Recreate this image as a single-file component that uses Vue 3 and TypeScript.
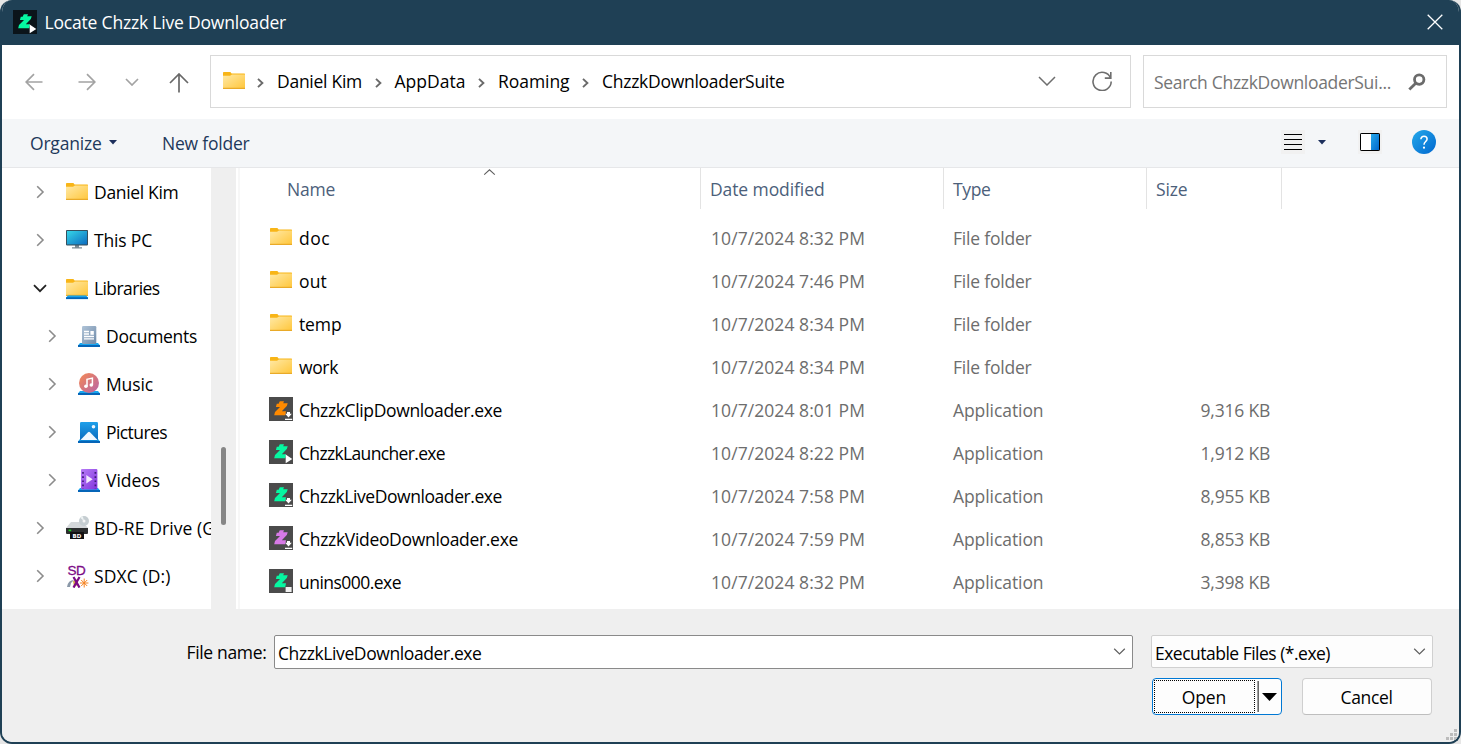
<script setup lang="ts">
interface Crumb { label: string; width: number }
interface TreeNode { label: string; icon: string; width: number; nested?: boolean; open?: boolean }
interface FileRow { name: string; width: number; date: string; kind: 'folder' | 'app'; size?: string; color?: string; badge?: 'down' | 'play' | 'stop' }

const crumbs: Crumb[] = [
  { label: 'Daniel Kim', width: 85 },
  { label: 'AppData', width: 71 },
  { label: 'Roaming', width: 71.5 },
  { label: 'ChzzkDownloaderSuite', width: 182.5 },
]

const tree: TreeNode[] = [
  { label: 'Daniel Kim', icon: 'folder', width: 84.5 },
  { label: 'This PC', icon: 'pc', width: 58 },
  { label: 'Libraries', icon: 'library', width: 65.5, open: true },
  { label: 'Documents', icon: 'documents', width: 91, nested: true },
  { label: 'Music', icon: 'music', width: 47, nested: true },
  { label: 'Pictures', icon: 'pictures', width: 61, nested: true },
  { label: 'Videos', icon: 'videos', width: 54, nested: true },
  { label: 'BD-RE Drive (G:)', icon: 'drive', width: 131 },
  { label: 'SDXC (D:)', icon: 'sd', width: 76.5 },
]

const green = '#06f7a1'
const files: FileRow[] = [
  { name: 'doc', width: 31, date: '10/7/2024 8:32 PM', kind: 'folder' },
  { name: 'out', width: 28, date: '10/7/2024 7:46 PM', kind: 'folder' },
  { name: 'temp', width: 42.5, date: '10/7/2024 8:34 PM', kind: 'folder' },
  { name: 'work', width: 39, date: '10/7/2024 8:34 PM', kind: 'folder' },
  { name: 'ChzzkClipDownloader.exe', width: 203, date: '10/7/2024 8:01 PM', kind: 'app', size: '9,316 KB', color: '#ff8a00', badge: 'down' },
  { name: 'ChzzkLauncher.exe', width: 146, date: '10/7/2024 8:22 PM', kind: 'app', size: '1,912 KB', color: green, badge: 'play' },
  { name: 'ChzzkLiveDownloader.exe', width: 203, date: '10/7/2024 7:58 PM', kind: 'app', size: '8,955 KB', color: green, badge: 'down' },
  { name: 'ChzzkVideoDownloader.exe', width: 219, date: '10/7/2024 7:59 PM', kind: 'app', size: '8,853 KB', color: '#d77ae6', badge: 'down' },
  { name: 'unins000.exe', width: 102, date: '10/7/2024 8:32 PM', kind: 'app', size: '3,398 KB', color: green, badge: 'stop' },
]

const zPath = 'M10.8 4.2H15l-.8 2h4.5l-.9 2.7-5 5.3H17L16.2 18.2H5.2L6 15.1l5-5.1H6.9L7.8 6.8h1.8z'

// Tracks the text so that a label takes up the given width.
const vFit = {
  mounted(el: HTMLElement, binding: { value: number }) {
    const natural = el.getBoundingClientRect().width
    const count = (el.textContent ?? '').trim().length
    if (count) el.style.letterSpacing = `${((binding.value - natural) / count).toFixed(3)}px`
  },
}
</script>

<template>
  <div class="desktop">
    <svg class="defs" width="0" height="0" aria-hidden="true">
      <defs>
        <linearGradient id="gFolder" x1="0" y1="0" x2="1" y2="1"><stop offset="0" stop-color="#ffe9a6" /><stop offset="1" stop-color="#ffc63a" /></linearGradient>
        <linearGradient id="gPc" x1="0" y1="0" x2="1" y2="1"><stop offset="0" stop-color="#35d6e8" /><stop offset="1" stop-color="#0d6cc0" /></linearGradient>
        <linearGradient id="gDoc" x1="0" y1="0" x2="1" y2="1"><stop offset="0" stop-color="#b0c4d8" /><stop offset="1" stop-color="#6f8aa8" /></linearGradient>
        <linearGradient id="gMusic" x1="0" y1="0" x2="1" y2="1"><stop offset="0" stop-color="#f58a54" /><stop offset="1" stop-color="#b763a8" /></linearGradient>
        <linearGradient id="gPic" x1="0" y1="0" x2="0" y2="1"><stop offset="0" stop-color="#1fa0ea" /><stop offset="1" stop-color="#0869bd" /></linearGradient>
        <linearGradient id="gVid" x1="0" y1="0" x2="1" y2="1"><stop offset="0" stop-color="#b67cf6" /><stop offset="1" stop-color="#8234dd" /></linearGradient>
        <linearGradient id="gBlue" x1="0" y1="0" x2="1" y2="1"><stop offset="0" stop-color="#25a9ea" /><stop offset="1" stop-color="#0067cf" /></linearGradient>
        <symbol id="folder" viewBox="0 0 22 17">
          <path d="M0 3V.8Q0 0 .8 0H7.4L8.6 1.6H21.4Q22 1.6 22 2.2V4H0z" fill="#f8b517" />
          <path d="M0 3.8H7L9 2.6H22V16.3Q22 17 21.3 17H.7Q0 17 0 16.3z" fill="url(#gFolder)" />
          <path d="M0 16.4H22" stroke="#e9aa28" stroke-width="1.2" />
        </symbol>
        <symbol id="base" viewBox="0 0 22 4">
          <path d="M2 0H20L22 2.5V4H0V2.5z" fill="#18a6ee" /><path d="M0 2H22V4H0z" fill="#0565b8" />
        </symbol>
        <symbol id="right" viewBox="0 0 9 14"><path d="M1.2 1.2 7 7 1.2 12.8" fill="none" stroke="currentColor" stroke-width="1.6" /></symbol>
      </defs>
    </svg>

    <div class="window">
      <header class="titlebar">
        <svg class="app-icon" viewBox="0 0 24 24">
          <rect width="24" height="24" fill="#0b141a" /><path :d="zPath" fill="#06f7a1" />
          <path d="M16.7 14.5 23.3 19l-6.6 4.3z" fill="#fff" />
        </svg>
        <span v-fit="241.5" class="fit title">Locate Chzzk Live Downloader</span>
        <svg class="close" viewBox="0 0 16 16"><path d="M.7.7l14.6 14.6M15.3.7.7 15.3" stroke="#fff" stroke-width="1.3" /></svg>
      </header>

      <nav class="navbar">
        <div class="nav-icons">
          <svg class="n-arrow" viewBox="0 0 18 18"><path d="M9 1.2 1.2 9 9 16.8M1.2 9H17.5" /></svg>
          <svg class="n-arrow fwd" viewBox="0 0 18 18"><path d="M9 1.2 16.8 9 9 16.8M16.8 9H.5" /></svg>
          <svg class="n-recent" viewBox="0 0 14 8"><path d="M1 1l6 6 6-6" /></svg>
          <svg class="n-up" viewBox="0 0 20 20"><path d="M1 10 10 1l9 9M10 1V19.6" /></svg>
        </div>
        <div class="address">
          <svg class="folder-icon"><use href="#folder" /></svg>
          <div v-for="c in crumbs" :key="c.label" class="crumb">
            <svg class="crumb-sep" viewBox="0 0 7 10"><path d="M1 .9 5.4 5 1 9.1" /></svg>
            <span v-fit="c.width" class="fit">{{ c.label }}</span>
          </div>
          <svg class="addr-down" viewBox="0 0 18 10"><path d="M1 1l8 8 8-8" /></svg>
          <svg class="refresh" viewBox="0 0 20 20"><path d="M18.6 7.2A9.1 9.1 0 1 0 19.2 10.6M18.8 1V7.1H12.8" /></svg>
        </div>
        <div class="search">
          <span v-fit="237" class="fit">Search ChzzkDownloaderSui...</span>
          <svg class="glass" viewBox="0 0 18 18"><circle cx="11.2" cy="6.6" r="4.7" /><path d="M8 10 1.3 16.6" /></svg>
        </div>
      </nav>

      <div class="toolbar">
        <span v-fit="71.5" class="fit">Organize</span>
        <svg class="tri" viewBox="0 0 8 5"><path d="M0 0H8L4 4.6z" /></svg>
        <span v-fit="87.5" class="fit new-folder">New folder</span>
        <svg class="view-list" viewBox="0 0 24 24" shape-rendering="crispEdges"><rect width="24" height="24" fill="#f1f1f1" /><path d="M3 4.5H21M3 9.5H21M3 14.5H21M3 19.5H21" stroke="#000" /></svg>
        <svg class="tri view-tri" viewBox="0 0 8 5"><path d="M0 0H8L4 4.6z" /></svg>
        <svg class="pane" viewBox="0 0 24 24"><rect width="24" height="24" fill="#f1f1f1" /><rect x="2.5" y="3.5" width="19" height="17" rx=".6" fill="#fff" /><path d="M13 4h8v16h-8z" fill="url(#gBlue)" /><rect x="2.5" y="3.5" width="19" height="17" rx=".6" fill="none" stroke="#000" /></svg>
        <svg class="help" viewBox="0 0 24 24"><circle cx="12" cy="12" r="12" fill="url(#gBlue)" /><path d="M8.9 9.3C8.9 7.4 10.2 6.3 12 6.3S15.1 7.4 15.1 9.1C15.1 11.5 12 11.6 12 14.8" fill="none" stroke="#fff" stroke-width="1.5" /><circle cx="12" cy="17.7" r="1.1" fill="#fff" /></svg>
      </div>

      <main class="content">
        <aside class="tree">
          <div v-for="n in tree" :key="n.label" class="node" :class="{ nested: n.nested }">
            <svg v-if="n.open" class="caret open" viewBox="0 0 14 9"><path d="M1 1.2l6 6 6-6" /></svg>
            <svg v-else class="caret"><use href="#right" /></svg>
            <svg class="node-icon" viewBox="0 0 24 24">
              <use v-if="n.icon === 'folder'" href="#folder" x="0" y="3" width="22" height="17" />
              <g v-else-if="n.icon === 'pc'">
                <path d="M6 19.2H16V20.4H6zM9 17h4v2.4H9z" fill="#7b8a94" />
                <rect y="2" width="22" height="15.4" rx=".8" fill="#35505f" /><rect x="1" y="3" width="20" height="13.4" fill="url(#gPc)" />
              </g>
              <g v-else-if="n.icon === 'library'">
                <use href="#folder" y="3" width="22" height="17" /><use href="#base" y="19.2" width="22" height="4" />
              </g>
              <g v-else-if="n.icon === 'documents'">
                <use href="#base" y="19" width="22" height="4" />
                <rect x="4" y="2" width="14.3" height="18" rx="1.2" fill="url(#gDoc)" />
                <path d="M6 7.5h5M6 10h5M6 12.5H16M6 14.8H16" stroke="#fff" stroke-width="1.3" /><rect x="12.4" y="7" width="3.4" height="3.8" fill="#fff" />
              </g>
              <g v-else-if="n.icon === 'music'">
                <use href="#base" y="19" width="22" height="4" />
                <circle cx="11" cy="11" r="10" fill="url(#gMusic)" />
                <path d="M9 14.2V7.3l5.4-1.2v7" fill="none" stroke="#fff" stroke-width="1.5" /><circle cx="7.9" cy="14.2" r="1.8" fill="#fff" /><circle cx="13.3" cy="13" r="1.8" fill="#fff" />
              </g>
              <g v-else-if="n.icon === 'pictures'">
                <use href="#base" y="19" width="22" height="4" />
                <rect x="2" y="2" width="18" height="18.5" rx="1.2" fill="url(#gPic)" />
                <path d="M2.5 20 10 12.2q1-1 2 0L19.5 20z" fill="#f0f8ff" /><circle cx="15.5" cy="6.7" r="1.8" fill="#f0f8ff" />
              </g>
              <g v-else-if="n.icon === 'videos'">
                <use href="#base" y="20" width="22" height="4" />
                <rect x="3" y="1" width="16.4" height="20.4" rx="1" fill="url(#gVid)" />
                <path d="M5 4V21M17.4 4V21" stroke="#3f1b78" stroke-width="1.7" stroke-dasharray="1.7 2.5" /><path d="M8.3 7V15.6L14.6 11.3z" fill="#f3eaff" />
              </g>
              <g v-else-if="n.icon === 'drive'">
                <path d="M5 6H17L22 12H0z" fill="#d4d7da" />
                <circle cx="18" cy="5" r="5" fill="#c5cdd1" /><path d="M18 5 14.2 1.8 16.8.2z" fill="#eef3f4" /><circle cx="18" cy="5" r="1.5" fill="#f5f5f5" />
                <path d="M0 12H22V17Q22 18 21 18H1Q0 18 0 17z" fill="#2b2d2e" /><rect x="2.6" y="13.6" width="2.6" height="1.6" fill="#17d51d" />
                <rect x="4" y="16" width="14" height="7" fill="#111" /><text x="11" y="21.8" class="bd">BD</text>
              </g>
              <g v-else>
                <path d="M1 23q1-7 7-7l-3 3-1 4z" fill="#8a98a8" /><path d="M7 17l5-2v6l-4 2z" fill="#d8b24a" />
                <text x="1.4" y="11.2" class="sd">SD</text>
                <path d="M7.5 13 13.5 23.6M13.5 13 7.5 23.6" stroke="#7b0a86" stroke-width="2.2" />
                <path d="M18.2 14.5V23.5M13.9 19H22.4M15.2 16l6 6M21.2 16l-6 6" stroke="#f58220" stroke-width="1" />
              </g>
            </svg>
            <span v-fit="n.width" class="fit">{{ n.label }}</span>
          </div>
        </aside>
        <div class="gutter"><div class="thumb"></div></div>
        <div class="splitter"></div>
        <section class="list">
          <svg class="sort" viewBox="0 0 12 6"><path d="M.7 5.6 6 .8l5.3 4.8" /></svg>
          <div class="grid head">
            <div class="c-name"><span v-fit="48" class="fit">Name</span></div>
            <div><span v-fit="114.5" class="fit">Date modified</span></div>
            <div><span v-fit="37.5" class="fit">Type</span></div>
            <div><span v-fit="31.5" class="fit">Size</span></div>
          </div>
          <div v-for="f in files" :key="f.name" class="grid row">
            <div class="c-file">
              <svg v-if="f.kind === 'folder'" class="row-folder"><use href="#folder" /></svg>
              <svg v-else class="row-app" viewBox="0 0 24 24">
                <rect width="24" height="24" fill="#4b4b4b" /><path :d="zPath" :fill="f.color" />
                <path v-if="f.badge === 'play'" d="M16.7 14.5 23.3 19l-6.6 4.3z" fill="#fff" />
                <path v-else-if="f.badge === 'down'" d="M18 15h3v1.8h1.8L19.5 20.4 16.2 16.8H18zM16 21.7h7.2v1.3H16z" fill="#fff" />
                <rect v-else x="16.6" y="18" width="6" height="5" fill="#f1f1f1" />
              </svg>
              <span v-fit="f.width" class="fit">{{ f.name }}</span>
            </div>
            <div><span v-fit="154" class="fit">{{ f.date }}</span></div>
            <div><span v-fit="f.kind === 'folder' ? 78.5 : 90.5" class="fit">{{ f.kind === 'folder' ? 'File folder' : 'Application' }}</span></div>
            <div class="c-size"><span v-if="f.size" v-fit="69.5" class="fit">{{ f.size }}</span></div>
          </div>
        </section>
      </main>

      <footer class="footer">
        <div class="line">
          <label v-fit="80" class="fit file-label">File name:</label>
          <div class="combo edit">
            <span v-fit="203.5" class="fit">ChzzkLiveDownloader.exe</span>
            <svg class="drop" viewBox="0 0 12 7"><path d="M.7.8 6 6 11.3.8" /></svg>
          </div>
          <div class="combo filter">
            <span v-fit="175" class="fit">Executable Files (*.exe)</span>
            <svg class="drop" viewBox="0 0 12 7"><path d="M.7.8 6 6 11.3.8" /></svg>
          </div>
        </div>
        <div class="buttons">
          <div class="btn open-btn">
            <div class="focus"><span v-fit="44.5" class="fit">Open</span></div>
            <div class="split"></div>
            <svg class="split-tri" viewBox="0 0 15 8"><path d="M0 0H15L7.5 8z" /></svg>
          </div>
          <div class="btn cancel"><span v-fit="52" class="fit">Cancel</span></div>
        </div>
        <svg class="grip" viewBox="0 0 11 11" shape-rendering="crispEdges"><path d="M8 0h3v3H8zM4 4h3v3H4zM8 4h3v3H8zM0 8h3v3H0zM4 8h3v3H4zM8 8h3v3H8z" fill="#bcbcbc" /></svg>
      </footer>
    </div>
  </div>
</template>

<style>
html, body { margin: 0; overflow: hidden; }
</style>

<style scoped>
* { box-sizing: border-box; }
.desktop { width: 1461px; height: 744px; background: #e6e6e6; font-family: "Open Sans", "Noto Sans", sans-serif; font-size: 17.5px; color: #000; }
.defs { position: absolute; }
svg { display: block; flex: none; }
.fit { display: inline-block; white-space: pre; flex: none; }
.window { width: 1461px; height: 744px; border: 2px solid #1f4055; border-top: 0; border-radius: 12px; overflow: hidden; display: flex; flex-direction: column; background: #efefef; }

.titlebar { height: 45px; flex: none; background: #1f4055; display: flex; align-items: center; padding: 0 16.5px 1px 11px; color: #fff; }
.app-icon { width: 24px; height: 24px; }
.title { margin-left: 7.5px; }
.close { width: 16px; height: 16px; margin-left: auto; }

.navbar { height: 74px; flex: none; background: #fff; display: flex; padding: 10px 12px 0 0; }
.nav-icons { width: 208px; height: 53px; display: flex; align-items: center; padding-left: 23px; fill: none; stroke: #a3a3a3; stroke-width: 1.7; }
.n-arrow { width: 18px; height: 18px; }
.fwd { margin-left: 35px; }
.n-recent { width: 14px; height: 8px; margin-left: 29px; }
.n-up { width: 20px; height: 20px; margin-left: 30px; margin-top: 2px; stroke: #686868; }
.address { width: 921px; height: 53px; border: 1px solid #d9d9d9; display: flex; align-items: center; padding: 0 0 1px 12px; }
.folder-icon { width: 22px; height: 17px; margin-right: -0.5px; margin-top: -1px; }
.crumb { display: flex; align-items: center; margin-left: 12.5px; }
.crumb-sep { width: 7px; height: 10px; margin-right: 13px; margin-top: 3px; fill: none; stroke: #6a6a6a; stroke-width: 1.9; }
.addr-down { width: 18px; height: 10px; margin-left: auto; fill: none; stroke: #6e6e6e; stroke-width: 1.5; }
.refresh { width: 20px; height: 20px; margin: 0 18px 0 36px; fill: none; stroke: #6e6e6e; stroke-width: 1.6; }
.search { width: 304px; height: 53px; margin-left: 12px; border: 1px solid #d9d9d9; display: flex; align-items: center; padding: 1px 20px 0 10px; color: #757575; }
.glass { width: 18px; height: 18px; margin-left: auto; fill: none; stroke: #6b6b6b; stroke-width: 2.8; }

.toolbar { height: 49px; flex: none; background: #f4f6f8; border-bottom: 1px solid #e6e7e9; display: flex; align-items: center; padding-left: 28px; color: #1e395b; }
.tri { width: 8px; height: 5px; margin-left: 7px; margin-top: -2px; fill: #1c2f5c; }
.new-folder { margin-left: 45.5px; }
.view-list { width: 24px; height: 24px; margin-left: 1031.5px; margin-top: -2px; }
.view-tri { margin-left: 13px; }
.pane { width: 24px; height: 24px; margin-left: 32px; margin-top: -2px; }
.help { width: 24px; height: 24px; margin-left: 30px; margin-top: -2px; }

.content { height: 441px; flex: none; background: #fff; display: flex; }
.tree { width: 209px; overflow: hidden; }
.node { height: 48px; display: flex; align-items: center; padding-left: 34px; }
.nested { padding-left: 46px; }
.caret { width: 9px; height: 14px; margin-right: 21px; color: #8c8c8c; }
.open { width: 14px; height: 9px; margin: 0 19px 0 -3px; fill: none; stroke: #222; stroke-width: 1.8; }
.node-icon { width: 24px; height: 24px; margin-right: 4px; }
.bd { font: 700 5.5px "DejaVu Sans", sans-serif; fill: #fff; text-anchor: middle; }
.sd { font: 400 13.5px "Liberation Sans", sans-serif; fill: #7b0a86; stroke: #7b0a86; stroke-width: 0.3px; letter-spacing: -0.5px; }
.gutter { width: 25px; background: #efefef; padding: 279px 0 0 10px; }
.thumb { width: 5px; height: 78px; border-radius: 3px; background: #868686; }
.splitter { width: 4px; border-left: 2px solid #fff; background: #f7f7f7; }
.list { flex: 1; position: relative; }
.sort { position: absolute; left: 243px; top: 1px; width: 13px; height: 6px; fill: none; stroke: #5f5f5f; stroke-width: 1.1; }
.grid { display: grid; grid-template-columns: 461px 243px 203px 135px; }
.grid > div { display: flex; align-items: center; padding: 0 0 1px 9px; }
.head { height: 49px; color: #4c607a; }
.head > div { height: 41px; border-right: 1px solid #e3e3e3; }
.grid.head > div { padding-bottom: 0; padding-top: 1px; }
.grid > .c-name { padding-left: 47px; }
.row { height: 43px; color: #6d6d6d; }
.row > div:nth-child(2) { padding-left: 10px; }
.grid > .c-file { padding-left: 29px; color: #000; }
.row-folder { width: 22px; height: 17px; margin: -3px 8px 0 1px; }
.row-app { width: 24px; height: 24px; margin: -2px 7px 0 0; }
.c-file .fit { margin-left: -1px; }
.grid > .c-size { justify-content: flex-end; padding-right: 12px; }

.footer { flex: 1; position: relative; padding-top: 26px; background: #efefef; }
.line { display: flex; height: 34px; }
.file-label { line-height: 34px; margin-left: 184.5px; }
.combo { display: flex; align-items: center; border: 1px solid #8a8a8a; background: #fff; border-radius: 2px; padding: 2px 6px 0 3px; }
.edit { width: 859px; height: 34px; margin-left: auto; }
.filter { width: 282px; height: 33px; margin: 0 26px 0 18px; background: #fdfdfd; border-color: #d0d0d0; padding: 2px 6px 0 3px; }
.drop { width: 13px; height: 7px; margin-left: auto; margin-top: -3px; fill: none; stroke: #5f5f5f; stroke-width: 1.2; }
.buttons { display: flex; justify-content: flex-end; gap: 20px; padding-right: 27px; margin-top: 9px; }
.btn { width: 130px; height: 37px; border: 1px solid #cfcfcf; border-bottom-color: #bebebe; border-radius: 4px; background: #fdfdfd; display: flex; align-items: center; }
.open-btn { border-color: #0078d4; padding-left: 1px; }
.focus { width: 101px; height: 33px; border: 1px dotted #000; display: flex; align-items: center; justify-content: center; padding: 1px 1px 0 0; }
.split { width: 2px; height: 31px; margin-left: 2px; background: linear-gradient(90deg, #a0a0a0 50%, #696969 50%); }
.split-tri { width: 15px; height: 8px; margin-left: 3px; }
.cancel { justify-content: center; padding: 1px 1px 0 0; }
.grip { position: absolute; right: 2.5px; bottom: 2px; width: 11px; height: 11px; }
</style>
